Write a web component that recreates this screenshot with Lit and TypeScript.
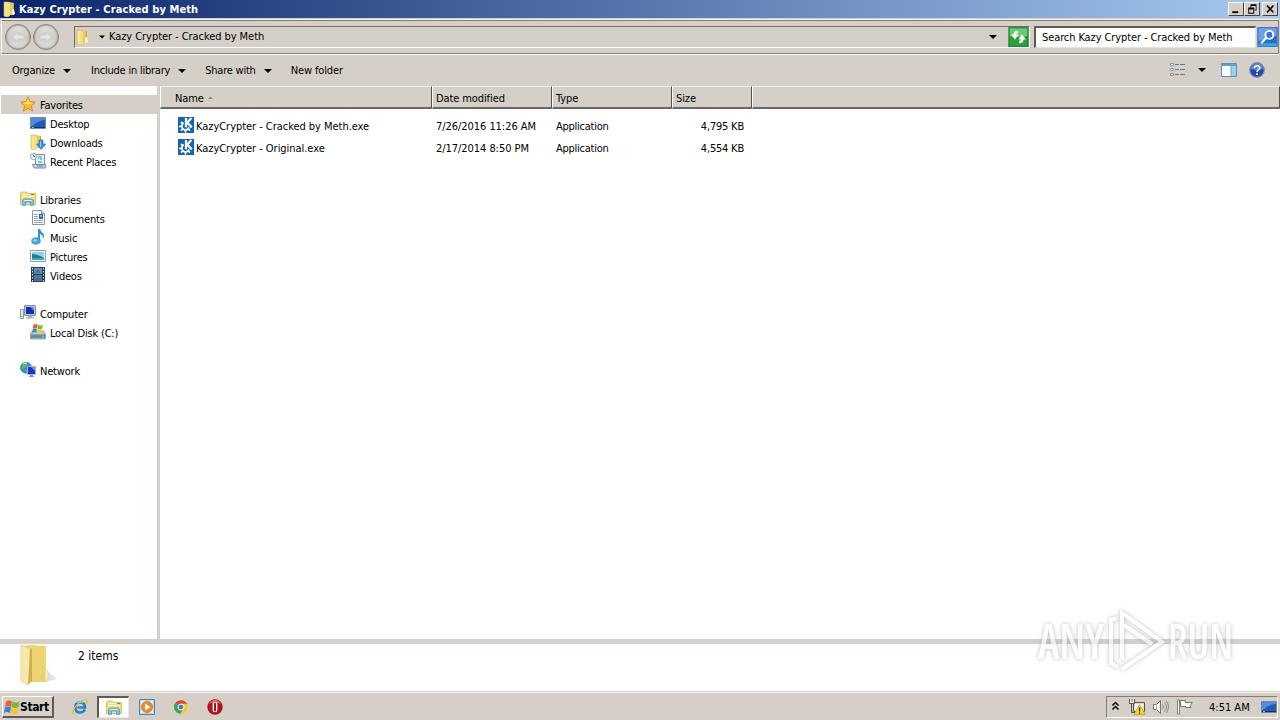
import { LitElement, html, svg, css, nothing } from "lit";
import { customElement, property } from "lit/decorators.js";

const folder = svg`
    <path d="M3 1h5v14l-3 1-2-1z" fill="#f8e796" stroke="#cba53c" stroke-width=".6"/>
    <path d="M8 1l5 1v12H7z" fill="#e9cb5c"/>
    <path d="M6 2l3 1v12l-3 1z" fill="#f6df83"/>
    <path d="M11 9l2-1 1 5-3 1z" fill="#fdf8da"/>
    <path d="M12.500 2v6" stroke="#cfa63a" fill="none"/>`;

const explorer = svg`
    <path d="M.5 2.500L1.500 1h5l1 1.500h8v11H.5z" fill="#f5dc80" stroke="#d5b04a" stroke-width=".8"/>
    <path d="M3 3.500h11M2 5.500h12" stroke="#fffbd8"/>
    <path d="M11 3.500h3" stroke="#55a345"/>
    <path d="M2.500 14.500V10q0-2 2-2h7q2 0 2 2v4.500h-3V11h-5v3.500z" fill="#79c1ea" stroke="#3f93cb" stroke-width=".7"/>
    <path d="M4 9.500h8" stroke="#d8f2ff"/>`;

const windowsFlag = svg`
    <path d="M2 2.500q3-2 6 0L7 8Q4 6 1 8z" fill="#e8622a"/>
    <path d="M8.500 2.500q3 2 7 0l-1 5.500q-3 2-7 0z" fill="#76b93c"/>
    <path d="M1 8.500q3-2 6 0l-1 5.500q-3-2-6 0z" fill="#3c82d8"/>
    <path d="M7.500 8.500q3 2 7 0l-1 5.500q-3 2-7 0z" fill="#f7c52c"/>`;

// every drawing uses a 16x16 grid
const icons: Record<string, unknown> = {
    folder,
    explorer,
    flag: windowsFlag,
    star: svg`
        <path d="M8 .8l2.200 4.800 5.200.6-3.900 3.500 1.100 5.300L8 12.400 3.400 15l1.100-5.300L.6 6.200l5.200-.6z" fill="#fbb82a" stroke="#e08a1c"/>
        <path d="M8 3l1.500 3.500 3.500.5-5 1.500L3 7l3.500-.5z" fill="#ffe985"/>`,
    desktop: svg`
        <path d="M.5 2.500h15v11H.5z" fill="#2458b4" stroke="#6b8aa8"/>
        <path d="M1 3h14v2Q8 5 1 12z" fill="#4f8cdd"/>
        <path d="M1 12.500h14" stroke="#182e60"/>
        <path d="M2 12.500h2" stroke="#70c860"/>`,
    downloads: svg`
        <g transform="translate(-2 0)">${folder}</g>
        <path d="M9 6h4v4h3l-5 5.500L6.500 10H9z" fill="#2f94dc" stroke="#1d6aad" stroke-width=".6"/>
        <path d="M10.500 7v6" stroke="#8dd1fb"/>`,
    recent: svg`
        <path d="M5.500 1.500h9v10h-9z" fill="#e7f2f8" stroke="#71909e"/>
        <path d="M2.500 11.500h13v3.500H4z" fill="#c4d6de" stroke="#71909e"/>
        <path d="M8 4h4M8 6h1m1 0h2M8 9h4M7 13h6" stroke="#4985a5"/>
        <circle cx="3.500" cy="3.500" r="3" fill="#f6fafc" stroke="#899eaa"/>
        <path d="M3.500 1.500v2H5" fill="none" stroke="#516d80"/>`,
    documents: svg`
        <path d="M2.500.5h9l3 3v11h-12z" fill="#fbfdff" stroke="#8397aa"/>
        <path d="M11.500.5v3h3" fill="#d8e3ec" stroke="#8397aa"/>
        <path d="M4 4.500h4M4 6.500h4M4 8.500h4M4 10.500h9M4 12.500h9" stroke="#8fa4bb"/>
        <path d="M9 4h4v5H9z" fill="#2e64a0"/><path d="M10 5h2v2h-2z" fill="#85bfdf"/>`,
    music: svg`
        <path d="M8 0h2q1 3 3 4 2 3 0 6 0-4-3-5v7H8z" fill="#3493d4"/>
        <ellipse cx="6" cy="12" rx="4.300" ry="3.300" fill="#48a9e6" stroke="#2b7db8" stroke-width=".6"/>
        <ellipse cx="5" cy="11.200" rx="2" ry="1" fill="#a5dcfa"/>`,
    pictures: svg`
        <path d="M.5 2.500h15v11H.5z" fill="#fff" stroke="#8c9daa"/>
        <path d="M2 4h12v8H2z" fill="#8bd3ef"/><path d="M2 6q5 0 12 4v2H2z" fill="#297b82"/>
        <path d="M2 10h12v2H2z" fill="#3fa4cd"/>`,
    videos: svg`
        <path d="M1 0h14v15H1z" fill="#273b4c"/>
        <path d="M4 1h8v6H4z" fill="#4a9bd5"/><path d="M4 8h8v6H4z" fill="#337fbd"/>
        <path d="M5 5l3-3 3 4H5zm0 8l2-3 4 3z" fill="#8a5850"/>
        <path d="M2.500 1v14M13.500 1v14" stroke="#e4edf2" stroke-dasharray="1.500 1.500"/>`,
    computer: svg`
        <path d="M.5 4.500h3v9h-3z" fill="#dce5ea" stroke="#8c9ca7"/><path d="M2 11v1" stroke="#57b05b"/>
        <path d="M4.500.5h11v10h-11z" fill="#bcc8d0" stroke="#8493a0"/>
        <path d="M6 2h8v7H6z" fill="#182bb8"/><path d="M10 2h4v4z" fill="#6388f0"/>
        <path d="M8 11h4v1h2v1.500H6V12h2z" fill="#a7b5bf"/>`,
    disk: svg`
        <path d="M.5 10l2-3h11l2 3v5H.5z" fill="#bcc8ce" stroke="#74848d" stroke-width=".7"/>
        <path d="M1 10.500h14v3.500H1z" fill="#5593a7"/><path d="M12 12.500h2" stroke="#72e668"/>
        <g transform="translate(2 -1) scale(.7)">${windowsFlag}</g>`,
    network: svg`
        <circle cx="6" cy="5.700" r="5.500" fill="#2f95c8" stroke="#28759c" stroke-width=".7"/>
        <path d="M2 3q3-3 6-1L5 6 2 7zM5 8h4l-2 3z" fill="#62ba52"/>
        <path d="M3 2q2-1 4-1" stroke="#d1f6ff" fill="none"/>
        <path d="M7.500 4.500h8v8h-8z" fill="#1c36c7" stroke="#a5b3c4"/>
        <path d="M11 5h4v4z" fill="#6d91f4"/><path d="M10 13h3v1h1v1H9v-1h1z" fill="#8795a5"/>`,
    kde: svg`
        <path d="M0 0h16v16H0z" fill="#1265b4"/>
        <circle cx="7.500" cy="9.300" r="3.600" fill="none" stroke="#fff" stroke-width="1.800"/>
        <path d="M7.500 13v2.500M4.500 12L3 13.700M3.800 9.300H1M4.500 6.500L3 5M10.500 12l1.500 1.700M11.500 9.800H14" stroke="#fff" stroke-width="1.800"/>
        <path d="M5.800 0H15V10L12 11 8.500 8.500V11H5.800z" fill="#1265b4"/>
        <path d="M8 1v9.300M13.300 1L9.300 5.600l4.400 4.700" fill="none" stroke="#fff" stroke-width="2.300"/>`,
    refresh: svg`
        <path d="M0 0h16v16H0z" fill="#27a23b"/><path d="M0 0h16v7Q8 9 0 7z" fill="#6dc873"/>
        <path d="M.5.5h15v15H.5z" fill="none" stroke="#2a8541"/>
        <path d="M7.500 3Q4 3 4 6H2l3.300 4L8 6H6q0-1 1.500-1zM8.500 13q3.500 0 3.500-3h2l-3.300-4L8 10h2q0 1-1.500 1z" fill="#fff"/>`,
    search: svg`
        <path d="M0 0h16v16H0z" fill="#246bd1"/><path d="M0 0h16v7Q8 8 0 12z" fill="#6f9eea"/>
        <path d="M0 13h16v3H0z" fill="#35aae4"/>
        <path d="M.5.500h15v15H.5z" fill="none" stroke="#3f73c4" stroke-width=".8"/>
        <circle cx="9.500" cy="6.300" r="3.200" fill="#3d74d4" stroke="#fff" stroke-width="1.500"/>
        <path d="M7 8.800L3 12.800" stroke="#fff" stroke-width="1.900"/>`,
    view: svg`
        <path d="M1.500 1.500h3v2h-3zM1.500 6.500h3v2h-3zM1.500 11.500h3v2h-3z" fill="#fff" stroke="#8d96a2"/>
        <path d="M6 2.500h4m1 0h5M6 7.500h4m1 0h5M6 12.500h4m1 0h5" stroke="#6f7886"/>`,
    pane: svg`
        <path d="M.5 1.500h15v13H.5z" fill="#fff" stroke="#5d90b5"/>
        <path d="M1 2h14v2H1z" fill="#5e9fc9"/><path d="M10 4h5v10h-5z" fill="#9bd2ec"/>
        <path d="M10 4v10" stroke="#6ca7c9"/>`,
    help: svg`
        <circle cx="8" cy="8" r="7.300" fill="#2449a6" stroke="#8090b2" stroke-width="1.200"/>
        <path d="M2 7a6 6 0 0112 0Q8 9 2 7z" fill="#5c83d5"/>
        <path d="M5.500 6q0-2.300 2.700-2.300T10.700 6C10.700 7.500 8 7.700 8 10" fill="none" stroke="#fff" stroke-width="1.600"/>
        <path d="M7.100 11.300h1.800v1.700H7.100z" fill="#fff"/>`,
    ie: svg`
        <path d="M13 10.500Q11.500 13.500 8 13.500 3.300 13.500 3.300 8.500T8 3.500q5 0 5 5H5.500" fill="none" stroke="#2582cb" stroke-width="2.600"/>
        <path d="M2.500 14.500Q-1.500 15 3 8 9 0 14.300.8q2 .7-.5 4.700" fill="none" stroke="#e6bb35" stroke-width="1.200"/>
        <path d="M5 4q3-2 6 0" fill="none" stroke="#8fd1f7"/>`,
    player: svg`
        <path d="M.5.5h15v15H.5z" fill="#b8dcf3" stroke="#4186b8"/>
        <path d="M2 2h12v12H2z" fill="#e2eff8"/>
        <circle cx="8" cy="8" r="5.700" fill="#f48518" stroke="#d96d10" stroke-width=".6"/>
        <path d="M6 4.500l5.500 3.500L6 11.500z" fill="#fff"/>`,
    chrome: svg`
        <circle cx="8" cy="8" r="6.800" fill="#f3c926"/>
        <path d="M8 8L2 4.500A7 7 0 0114 4.800H8z" fill="#db473b"/>
        <path d="M8 8L2.100 4.300A7 7 0 007.300 15L10.500 9z" fill="#3aa757"/>
        <circle cx="8" cy="8" r="3" fill="#477fd8" stroke="#fff"/>`,
    opera: svg`
        <circle cx="8" cy="8" r="7.700" fill="#b3121a"/><path d="M2 5Q4 1 8 1t6 4Q8 2 2 5z" fill="#e66360"/>
        <rect x="5.600" y="2.700" width="4.800" height="10.600" rx="2.400" fill="#fff"/>
        <rect x="7" y="3.500" width="2" height="9" rx="1" fill="#a5141c"/>`,
    net: svg`
        <path d="M4.500 3.500h11v9h-11z" fill="#ded9d2" stroke="#56534f"/><path d="M6 5h8v5H6z" fill="#f5f4f1"/>
        <path d="M.5 0v4.500h5V0M3 0v3" fill="#fff" stroke="#56534f"/><path d="M2.500 5v8.500h4" fill="none" stroke="#56534f"/>
        <path d="M10.500 5.500L16 15.500H5z" fill="#fbd820" stroke="#b59a1c" stroke-width=".7"/>
        <path d="M10.500 8.500v4m0 1v1.200" stroke="#222" stroke-width="1.200"/>`,
    sound: svg`
        <path d="M.5 5.500h3l4-4v13l-4-4h-3z" fill="#fff" stroke="#77736e"/><path d="M3.500 5v6" stroke="#aaa"/>
        <path d="M9.500 5.500q2 2.500 0 5M11.500 3.500q4 4.500 0 9M13.500 2q4 6 0 12" fill="none" stroke="#8c8882"/>`,
    action: svg`
        <path d="M.5 1h2v14h-2z" fill="#fff" stroke="#68645f" stroke-width=".8"/>
        <path d="M3.500 1.500h5v2h7l-2.500 3 1 2H8.500v-1h-5z" fill="#fff" stroke="#77736e"/>`,
    sort: svg`<path d="M4 8h5L6.500 5.500z" fill="#8b8782"/>`,
    caret: svg`<path d="M4 6h8l-4 4z" fill="#000"/>`,
    chevron: svg`<path d="M5.500 6.500l3-3 3 3M5.500 10.500l3-3 3 3" fill="none" stroke="#000" stroke-width="1.500"/>`,
    back: svg`<path d="M14 6H8V3L2 8l6 5v-3h6z" fill="#e6e4e1" stroke="#c9c6c2" stroke-width=".8"/>`,
    forward: svg`<path d="M2 6h6V3l6 5-6 5v-3H2z" fill="#e6e4e1" stroke="#c9c6c2" stroke-width=".8"/>`,
    minimize: svg`<path d="M3 11h8v2.500H3z"/>`,
    restore: svg`<path d="M6 1.500h8v2.500H6zM13 4h1v6h-1zM12 9h2v1h-2zM6 4h1v2H6zM3 6h8v2.500H3zM3 8h1.300v6H3zM9.700 8H11v6H9.700zM3 13h8v1.200H3z"/>`,
    close: svg`<path d="M4 3.500l8.500 9M12.500 3.500L4 12.500" stroke="#000" stroke-width="2"/>`,
};

@customElement("ui-icon")
class UiIcon extends LitElement {
    static styles = css`
        :host {
            display: block;
            flex: none;
            width: 16px;
            height: 16px;
        }

        svg {
            display: block;
            width: 100%;
            height: 100%;
        }
    `;

    @property() name = "";

    render() {
        return html`<svg viewBox="0 0 16 16">${icons[this.name]}</svg>`;
    }
}

const places = [
    { label: "Favorites", icon: "star", top: true, selected: true },
    { label: "Desktop", icon: "desktop" },
    { label: "Downloads", icon: "downloads" },
    { label: "Recent Places", icon: "recent" },
    null,
    { label: "Libraries", icon: "explorer", top: true },
    { label: "Documents", icon: "documents" },
    { label: "Music", icon: "music" },
    { label: "Pictures", icon: "pictures" },
    { label: "Videos", icon: "videos" },
    null,
    { label: "Computer", icon: "computer", top: true },
    { label: "Local Disk (C:)", icon: "disk" },
    null,
    { label: "Network", icon: "network", top: true },
];

@customElement("nav-pane")
class NavPane extends LitElement {
    static styles = css`
        :host {
            display: block;
            width: 160px;
            padding-top: 9px;
            box-sizing: border-box;
            background: #fff;
            border-right: 3px solid #d5cfc7;
            letter-spacing: -0.2px;
        }

        .row {
            display: flex;
            align-items: flex-start;
            gap: 4px;
            height: 19px;
            box-sizing: border-box;
            margin-left: 1px;
            padding: 1px 0 0 29px;
        }

        .row span {
            margin-top: 3px;
        }

        .top {
            padding-left: 19px;
        }

        .selected {
            background: #d5cfc7;
        }
    `;

    render() {
        return places.map(
            (p) => html`
                <div class="row ${p?.top ? "top" : ""} ${p?.selected ? "selected" : ""}">
                    ${p ? html`<ui-icon name=${p.icon}></ui-icon><span>${p.label}</span>` : nothing}
                </div>
            `
        );
    }
}

const files = [
    { name: "KazyCrypter - Cracked by Meth.exe", date: "7/26/2016 11:26 AM", type: "Application", size: "4,795 KB" },
    { name: "KazyCrypter - Original.exe", date: "2/17/2014 8:50 PM", type: "Application", size: "4,554 KB" },
];

@customElement("file-list")
class FileList extends LitElement {
    static styles = css`
        :host {
            display: block;
            flex: 1;
            background: #fff;
        }

        .head,
        .file {
            display: grid;
            grid-template-columns: 272px 120px 120px 80px 1fr;
        }

        .head {
            height: 23px;
            margin-bottom: 6px;
        }

        .cell {
            display: flex;
            align-items: center;
            box-sizing: border-box;
            padding: 3px 0 0 3px;
            background: #d5cfc7;
            border: solid;
            border-width: 1px 1px 2px 1px;
            border-color: #f4f1ec #55524e #6b6863 #fff;
        }

        .cell:first-child {
            padding-left: 14px;
        }

        .file {
            height: 22px;
            align-items: start;
            line-height: 24px;
        }

        .name {
            display: flex;
            gap: 2px;
            padding-left: 18px;
            letter-spacing: -0.04px;
        }

        .name ui-icon {
            margin-top: 2px;
        }

        .info {
            padding-left: 4px;
            letter-spacing: -0.05px;
        }

        .type {
            padding-left: 4px;
            letter-spacing: -0.25px;
        }

        .size {
            text-align: right;
            padding-right: 8px;
            letter-spacing: -0.2px;
        }
    `;

    render() {
        return html`
            <div class="head">
                <div class="cell">Name <ui-icon name="sort"></ui-icon></div>
                <div class="cell">Date modified</div>
                <div class="cell">Type</div>
                <div class="cell">Size</div>
                <div class="cell"></div>
            </div>
            ${files.map(
                (f) => html`
                    <div class="file">
                        <div class="name"><ui-icon name="kde"></ui-icon><span>${f.name}</span></div>
                        <div class="info">${f.date}</div>
                        <div class="type">${f.type}</div>
                        <div class="size">${f.size}</div>
                    </div>
                `
            )}
        `;
    }
}

@customElement("task-bar")
class TaskBar extends LitElement {
    static styles = css`
        :host {
            display: flex;
            align-items: flex-start;
            height: 28px;
            box-sizing: border-box;
            padding: 3px 2px 1px;
            background: #d5cfc7;
            border-top: 1px solid #f7f5f2;
            box-shadow: 0 -1px #d5cfc7;
        }

        .start {
            display: flex;
            align-items: center;
            width: 52px;
            height: 22px;
            box-sizing: border-box;
            padding-left: 1px;
            border: solid;
            border-width: 1px 2px 2px 1px;
            border-color: #fff #5e5b57 #5e5b57 #fff;
            font-size: 12px;
            font-weight: bold;
            letter-spacing: -0.4px;
        }

        .quick {
            display: flex;
            align-items: center;
            gap: 1px;
            margin-left: 9px;
        }

        .task {
            display: flex;
            align-items: center;
            justify-content: center;
            width: 33px;
            height: 22px;
            box-sizing: border-box;
        }

        .active {
            width: 32px;
            background: #fff;
            border: solid;
            border-width: 2px 1px 1px 2px;
            border-color: #5e5b57 #e8e5e0 #e8e5e0 #5e5b57;
        }

        .tray {
            display: flex;
            align-items: center;
            height: 22px;
            width: 172px;
            box-sizing: border-box;
            margin-left: auto;
            border: 1px solid;
            border-color: #827f7a #fff #fff #827f7a;
            gap: 8px;
        }

        .tray ui-icon:first-child {
            margin-right: -2px;
        }

        .clock {
            margin-left: 8px;
            margin-right: auto;
            padding-top: 1px;
            letter-spacing: 0;
        }
    `;

    render() {
        return html`
            <div class="start"><ui-icon name="flag"></ui-icon>Start</div>
            <div class="quick">
                <div class="task"><ui-icon name="ie"></ui-icon></div>
                <div class="task active"><ui-icon name="explorer"></ui-icon></div>
                <div class="task"><ui-icon name="player"></ui-icon></div>
                <div class="task"><ui-icon name="chrome"></ui-icon></div>
                <div class="task"><ui-icon name="opera"></ui-icon></div>
            </div>
            <div class="tray">
                <ui-icon name="chevron"></ui-icon>
                <ui-icon name="net"></ui-icon>
                <ui-icon name="sound"></ui-icon>
                <ui-icon name="action"></ui-icon>
                <span class="clock">4:51 AM</span>
                <ui-icon name="desktop"></ui-icon>
            </div>
        `;
    }
}

@customElement("app-root")
class AppRoot extends LitElement {
    static styles = css`
        :host {
            display: flex;
            flex-direction: column;
            position: relative;
            width: 1280px;
            height: 720px;
            overflow: hidden;
            background: #d5cfc7;
            color: #000;
            font: 11px/14px "DejaVu Sans Condensed", "DejaVu Sans", sans-serif;
            font-stretch: condensed;
            letter-spacing: -0.1px;
            white-space: nowrap;
        }

        .title {
            display: flex;
            align-items: center;
            height: 18px;
            padding: 0 2px 0 1px;
            background: linear-gradient(90deg, #0a246a, #a6caf0);
            color: #fff;
            font-weight: bold;
            letter-spacing: 0.09px;
        }

        .title span {
            margin-left: 2px;
            padding-top: 1px;
            flex: 1;
        }

        .sysbtn {
            width: 16px;
            height: 14px;
            box-sizing: border-box;
            background: #d5cfc7;
            border: 1px solid;
            border-color: #fff #44413e #44413e #fff;
        }

        .sysbtn ui-icon {
            width: 14px;
            height: 12px;
        }

        .sysbtn:last-child {
            margin-left: 2px;
        }

        .address {
            display: flex;
            align-items: center;
            height: 34px;
            box-sizing: border-box;
            margin: 2px 1px 0;
            padding: 0 0 0 3px;
            border: 1px solid;
            border-color: #817d78 #817d78 #817d78 #fff;
            box-shadow: 0 -1px #f5f2ee, 0 1px #fff;
        }

        .round {
            display: flex;
            align-items: center;
            justify-content: center;
            width: 26px;
            height: 26px;
            margin-right: 2px;
            box-sizing: border-box;
            border-radius: 50%;
            border: 1px solid #84817d;
            box-shadow: inset 0 0 2px 1px #aaa7a3;
            background: linear-gradient(#e4e2df, #d0cdc9 50%, #dfddda);
        }

        .path {
            display: flex;
            align-items: center;
            width: 956px;
            height: 22px;
            box-sizing: border-box;
            margin-left: 13px;
            border: 1px solid;
            border-color: #716e6a #fff #fff #716e6a;
        }

        .path ui-icon:first-child {
            margin: 0 1px 0 -1px;
        }

        .path .crumb {
            flex: 1;
            letter-spacing: -0.06px;
        }

        .path .small {
            width: 12px;
            height: 12px;
            margin: 0 1px 0 5px;
        }

        .go {
            width: 21px;
            height: 20px;
        }

        .path .go {
            margin: 0 0 0 7px;
        }

        .search {
            display: flex;
            align-items: center;
            width: 222px;
            height: 22px;
            box-sizing: border-box;
            margin: 0 1px 0 4px;
            padding-left: 6px;
            background: #fff;
            border: solid;
            border-width: 2px 1px 1px 2px;
            border-color: #5e5b57 #e5e1dc #e5e1dc #5e5b57;
        }

        .tools {
            display: flex;
            align-items: center;
            height: 32px;
            padding: 0 15px 0 12px;
        }

        .tools .menu {
            display: flex;
            align-items: center;
            gap: 4px;
            margin-right: 16px;
            padding-top: 1px;
            letter-spacing: -0.17px;
        }

        .tools .menu:nth-child(n + 2) {
            margin-right: 15px;
            letter-spacing: -0.22px;
        }

        .tools .menu:nth-child(4) {
            letter-spacing: -0.12px;
        }

        .tools .view {
            margin-left: auto;
        }

        .tools .view + ui-icon {
            margin: 0 11px 0 9px;
        }

        .tools .help {
            margin-left: 12px;
        }

        .main {
            display: flex;
            height: 553px;
        }

        .details {
            display: flex;
            height: 48px;
            margin-top: 5px;
            padding-left: 18px;
            background: #fff;
        }

        .big {
            width: 42px;
            height: 46px;
        }

        .count {
            margin: 5px 0 0 18px;
            font-size: 12px;
            letter-spacing: 0;
        }

        .mark {
            position: absolute;
            left: 1030px;
            top: 602px;
            filter: drop-shadow(0 0 2px #999);
            opacity: 0.65;
        }
    `;

    render() {
        return html`
            <div class="title">
                <ui-icon name="folder"></ui-icon>
                <span>Kazy Crypter - Cracked by Meth</span>
                <div class="sysbtn"><ui-icon name="minimize"></ui-icon></div>
                <div class="sysbtn"><ui-icon name="restore"></ui-icon></div>
                <div class="sysbtn"><ui-icon name="close"></ui-icon></div>
            </div>
            <div class="address">
                <div class="round"><ui-icon name="back"></ui-icon></div>
                <div class="round"><ui-icon name="forward"></ui-icon></div>
                <div class="path">
                    <ui-icon name="folder"></ui-icon>
                    <ui-icon class="small" name="caret"></ui-icon>
                    <span class="crumb">Kazy Crypter - Cracked by Meth</span>
                    <ui-icon name="caret"></ui-icon>
                    <ui-icon class="go" name="refresh"></ui-icon>
                </div>
                <div class="search">Search Kazy Crypter - Cracked by Meth</div>
                <ui-icon class="go" name="search"></ui-icon>
            </div>
            <div class="tools">
                <div class="menu">Organize <ui-icon name="caret"></ui-icon></div>
                <div class="menu">Include in library <ui-icon name="caret"></ui-icon></div>
                <div class="menu">Share with <ui-icon name="caret"></ui-icon></div>
                <div class="menu">New folder</div>
                <ui-icon class="view" name="view"></ui-icon>
                <ui-icon name="caret"></ui-icon>
                <ui-icon name="pane"></ui-icon>
                <ui-icon class="help" name="help"></ui-icon>
            </div>
            <div class="main">
                <nav-pane></nav-pane>
                <file-list></file-list>
            </div>
            <div class="details">
                <svg class="big" viewBox="0 0 42 46">
                    <path d="M26 38l13-3-9-7z" fill="#e2e2e2"/>
                    <path d="M3 2l10-1 15 1v36H12z" fill="#ecd374"/>
                    <path d="M3 1l9 4v32l-2 4-7-4z" fill="#f7e8ab" stroke="#e2c86c" stroke-width=".6"/>
                    <path d="M12 5l2-1v33l-4 4z" fill="#cfae4c"/>
                    <path d="M27 25l3 2v8l-3 3z" fill="#faf3d1" stroke="#d9c070" stroke-width=".6"/>
                </svg>
                <div class="count">2 items</div>
            </div>
            <task-bar></task-bar>
            <svg class="mark" width="220" height="78" fill="#fff" font-family="Open Sans" font-size="48" font-weight="600">
                <text x="8" y="57" textLength="66" lengthAdjust="spacingAndGlyphs">ANY</text>
                <text x="138" y="57" textLength="65" lengthAdjust="spacingAndGlyphs">RUN</text>
                <path d="M92 58V11l40 29-40 27M92 22l30 20M87 16l-6 2v43l7 4" fill="none" stroke="#fff" stroke-width="4"/>
            </svg>
        `;
    }
}
